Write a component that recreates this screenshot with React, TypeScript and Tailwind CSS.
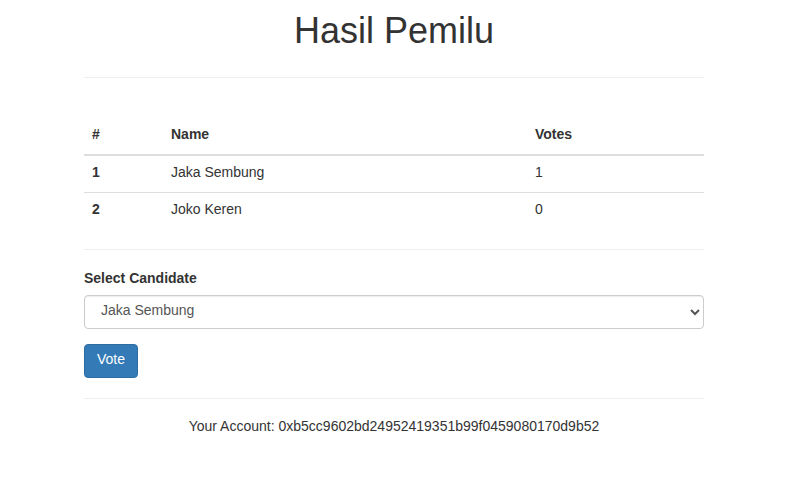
import React from "react";

const candidates = [
  { id: 1, name: "Jaka Sembung", votes: 1 },
  { id: 2, name: "Joko Keren", votes: 0 },
];

const App = () => {
  return (
    <div className="min-h-screen bg-white text-[14px] leading-[20px] text-[#333] font-['Liberation_Sans',Arial,sans-serif]">
      <div className="w-[620px] ml-[84px]">
        <h1 className="pt-[11px] text-center text-[36px] leading-[40px] font-normal">
          Hasil Pemilu
        </h1>
        <hr className="mt-[26px] border-t border-[#eee]" />
        <table className="mt-[39px] w-full text-left">
          <thead>
            <tr className="border-b-2 border-[#ddd]">
              <th className="w-[79px] px-2 pt-[7px] pb-[10px] font-bold">#</th>
              <th className="w-[364px] px-2 pt-[7px] pb-[10px] font-bold">Name</th>
              <th className="px-2 pt-[7px] pb-[10px] font-bold">Votes</th>
            </tr>
          </thead>
          <tbody>
            {candidates.map(({ id, name, votes }, i) => (
              <tr
                key={id}
                className={i === 0 ? "border-b border-[#ddd]" : ""}>
                <th className="px-2 pt-[6px] pb-[10px] font-bold">{id}</th>
                <td className="px-2 pt-[6px] pb-[10px]">{name}</td>
                <td className="px-2 pt-[6px] pb-[10px]">{votes}</td>
              </tr>
            ))}
          </tbody>
        </table>
        <hr className="mt-[20px] border-t border-[#eee]" />
        <form className="mt-[18px]" onSubmit={(e) => e.preventDefault()}>
          <label className="block mb-[7px] font-bold">Select Candidate</label>
          <select className="block w-full h-[34px] px-3 pt-1 pb-2 bg-white text-[#555] border border-[#ccc] rounded shadow-[inset_0_1px_1px_rgba(0,0,0,0.075)]">
            {candidates.map(({ id, name }) => (
              <option key={id} value={id}>
                {name}
              </option>
            ))}
          </select>
          <button
            type="submit"
            className="mt-[15px] h-[34px] px-3 pt-1 pb-2 bg-[#337ab7] border border-[#2e6da4] rounded text-white">
            Vote
          </button>
        </form>
        <hr className="mt-[20px] border-t border-[#eee]" />
        <p className="mt-[17px] text-center">
          Your Account: 0xb5cc9602bd24952419351b99f0459080170d9b52
        </p>
      </div>
    </div>
  );
};

export default App;
